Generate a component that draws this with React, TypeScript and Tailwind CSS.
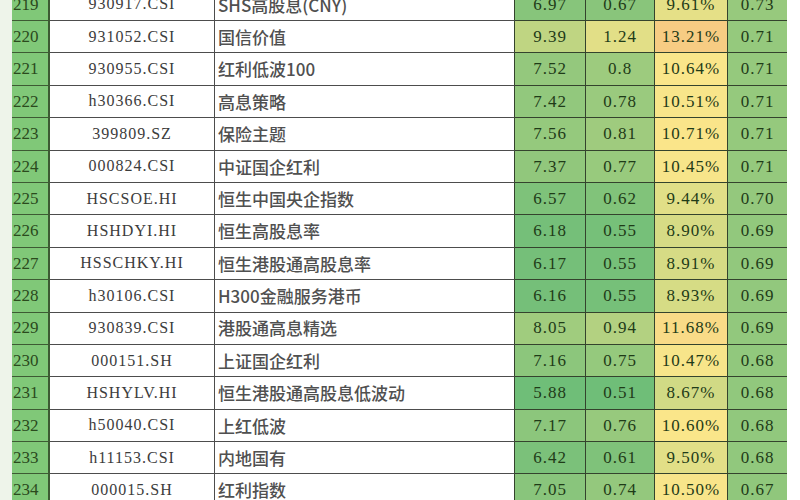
import React from "react";

type Row = [number, string, string, number, number, number, number];

const rows: Row[] = [
  [219, "930917.CSI", "SHS高股息(CNY)", 6.97, 0.67, 9.61, 0.73],
  [220, "931052.CSI", "国信价值", 9.39, 1.24, 13.21, 0.71],
  [221, "930955.CSI", "红利低波100", 7.52, 0.8, 10.64, 0.71],
  [222, "h30366.CSI", "高息策略", 7.42, 0.78, 10.51, 0.71],
  [223, "399809.SZ", "保险主题", 7.56, 0.81, 10.71, 0.71],
  [224, "000824.CSI", "中证国企红利", 7.37, 0.77, 10.45, 0.71],
  [225, "HSCSOE.HI", "恒生中国央企指数", 6.57, 0.62, 9.44, 0.7],
  [226, "HSHDYI.HI", "恒生高股息率", 6.18, 0.55, 8.9, 0.69],
  [227, "HSSCHKY.HI", "恒生港股通高股息率", 6.17, 0.55, 8.91, 0.69],
  [228, "h30106.CSI", "H300金融服务港币", 6.16, 0.55, 8.93, 0.69],
  [229, "930839.CSI", "港股通高息精选", 8.05, 0.94, 11.68, 0.69],
  [230, "000151.SH", "上证国企红利", 7.16, 0.75, 10.47, 0.68],
  [231, "HSHYLV.HI", "恒生港股通高股息低波动", 5.88, 0.51, 8.67, 0.68],
  [232, "h50040.CSI", "上红低波", 7.17, 0.76, 10.6, 0.68],
  [233, "h11153.CSI", "内地国有", 6.42, 0.61, 9.5, 0.68],
  [234, "000015.SH", "红利指数", 7.05, 0.74, 10.5, 0.67],
];

// colour scale like Excel's green-yellow-red conditional format
const GREEN = [102, 187, 119];
const YELLOW = [250, 230, 138];
const RED = [240, 138, 112];

function mix(a: number[], b: number[], t: number) {
  const k = Math.max(0, Math.min(1, t));
  return a.map((v, i) => Math.round(v + (b[i] - v) * k));
}

function scale(v: number, lo: number, mid: number, hi: number) {
  const c = v <= mid ? mix(GREEN, YELLOW, (v - lo) / (mid - lo)) : mix(YELLOW, RED, (v - mid) / (hi - mid));
  return `rgb(${c[0]},${c[1]},${c[2]})`;
}

const numFont = { fontFamily: "'Liberation Serif', serif" };

function ValueCell({ text, bg, last }: { text: string; bg: string; last?: boolean }) {
  return (
    <div
      className={`flex items-center justify-center border-b-[1.5px] border-[#34432d] text-[17px] tracking-[1px] text-[#1f3b18] ${
        last ? "" : "border-r-[1.5px]"
      }`}
      style={{ backgroundColor: bg, ...numFont }}
    >
      {text}
    </div>
  );
}

export default function App() {
  return (
    <div className="w-[800px] h-[500px] overflow-hidden bg-white flex">
      <div className="w-[12px] shrink-0 bg-[#eef4ea]" />
      <div className="-mt-[11.4px] grid grid-cols-[38px_165px_300px_71px_69px_73px_59px] auto-rows-[32.4px]">
        {rows.map((r) => (
          <React.Fragment key={r[0]}>
            <div
              className="flex items-center pl-[1px] bg-[#80c878] border-b-[1.5px] border-r-2 border-[#3d5a33] text-[17px] text-[#2b4a1d]"
              style={numFont}
            >
              {r[0]}
            </div>
            <div
              className="flex items-center justify-center border-b-[1.5px] border-r-[1.5px] border-[#4d4d4d] text-[16px] tracking-[1px] text-[#3c3c3c]"
              style={numFont}
            >
              {r[1]}
            </div>
            <div className="flex items-center pl-[3px] border-b-[1.5px] border-r-[1.5px] border-b-[#4d4d4d] border-r-[#34432d] text-[17px] font-medium text-[#505050] font-['Noto_Sans_CJK_SC',sans-serif]">
              {r[2]}
            </div>
            <ValueCell text={r[3].toFixed(2)} bg={scale(r[3], 5.5, 12, 20)} />
            <ValueCell text={String(r[4])} bg={scale(r[4], 0.45, 1.39, 2.5)} />
            <ValueCell text={r[5].toFixed(2) + "%"} bg={scale(r[5], 3.7, 10.6, 20)} />
            <ValueCell text={r[6].toFixed(2)} bg={scale(r[6], 0.3, 1.6, 3)} last />
          </React.Fragment>
        ))}
      </div>
    </div>
  );
}
